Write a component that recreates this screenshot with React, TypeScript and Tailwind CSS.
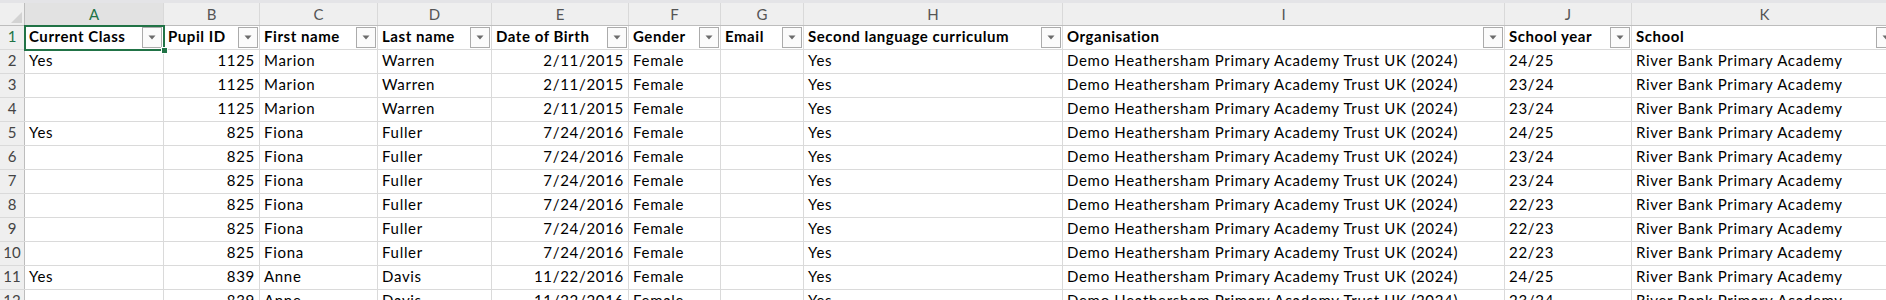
import React from "react";

const cols = [
  { key: "A", w: "w-[139px]", label: "Current Class", align: "left" },
  { key: "B", w: "w-[96px]", label: "Pupil ID", align: "right" },
  { key: "C", w: "w-[118px]", label: "First name", align: "left" },
  { key: "D", w: "w-[114px]", label: "Last name", align: "left" },
  { key: "E", w: "w-[137px]", label: "Date of Birth", align: "right" },
  { key: "F", w: "w-[92px]", label: "Gender", align: "left" },
  { key: "G", w: "w-[83px]", label: "Email", align: "left" },
  { key: "H", w: "w-[259px]", label: "Second language curriculum", align: "left" },
  { key: "I", w: "w-[442px]", label: "Organisation", align: "left" },
  { key: "J", w: "w-[127px]", label: "School year", align: "left" },
  { key: "K", w: "w-[266px]", label: "School", align: "left" },
];

const ORG = "Demo Heathersham Primary Academy Trust UK (2024)";
const SCH = "River Bank Primary Academy";

const m = ["1125", "Marion", "Warren", "2/11/2015"];
const f = ["825", "Fiona", "Fuller", "7/24/2016"];
const a = ["839", "Anne", "Davis", "11/22/2016"];

const mk = (cur: string, p: string[], yr: string) => [cur, ...p, "Female", "", "Yes", ORG, yr, SCH];

const rows: string[][] = [
  mk("Yes", m, "24/25"),
  mk("", m, "23/24"),
  mk("", m, "23/24"),
  mk("Yes", f, "24/25"),
  mk("", f, "23/24"),
  mk("", f, "23/24"),
  mk("", f, "22/23"),
  mk("", f, "22/23"),
  mk("", f, "22/23"),
  mk("Yes", a, "24/25"),
  mk("", a, "23/24"),
];

function FilterBtn() {
  return (
    <div className="absolute right-[1px] top-[1px] w-[20px] h-[21px] border border-[#ababab] bg-[#fbfbfb] flex items-center justify-center">
      <svg width="8" height="5" viewBox="0 0 8 5">
        <path d="M0.5 0.5 L7.5 0.5 L4 4.5 Z" fill="#6b6b6b" />
      </svg>
    </div>
  );
}

export default function App() {
  return (
    <div
      className="relative w-[1886px] h-[300px] overflow-hidden bg-white text-black"
      style={{ fontFamily: "Lato, 'Open Sans', sans-serif" }}
    >
      <div className="h-[3px] bg-[#e4e4e7]" />
      {/* column headers */}
      <div className="flex h-[23px] bg-[#efefef] border-b border-[#bdbdbd]">
        <div className="relative w-[25px] shrink-0 border-r border-[#bdbdbd]">
          <svg className="absolute right-[2px] bottom-[2px]" width="11" height="11" viewBox="0 0 11 11">
            <path d="M11 0 L11 11 L0 11 Z" fill="#d3d3d3" />
          </svg>
        </div>
        {cols.map((c) => (
          <div
            key={c.key}
            className={`${c.w} shrink-0 border-r border-[#d9d9d9] flex items-center justify-center text-[15px] ${
              c.key === "A" ? "text-[#217346] bg-[#e2e2e2]" : "text-[#555555]"
            }`}
          >
            {c.key}
          </div>
        ))}
      </div>
      {/* header data row */}
      <div className="flex h-[24px] border-b border-[#dadada]">
        <div className="w-[25px] shrink-0 bg-[#efefef] border-r border-[#bdbdbd] flex items-end justify-center pb-[2px] text-[15px] text-[#217346]">
          1
        </div>
        {cols.map((c) => (
          <div
            key={c.key}
            className={`${c.w} shrink-0 relative border-r border-[#dadada] flex items-end pl-[4px] pb-[2px] text-[15px] tracking-[0.55px] font-bold whitespace-nowrap overflow-hidden`}
          >
            {c.label}
            <FilterBtn />
          </div>
        ))}
      </div>
      {rows.map((r, i) => (
        <div key={i} className="flex h-[24px] border-b border-[#dadada]">
          <div className="w-[25px] shrink-0 bg-[#efefef] border-r border-[#bdbdbd] flex items-end justify-center pb-[2px] text-[15px] text-[#444444]">
            {i + 2}
          </div>
          {cols.map((c, j) => (
            <div
              key={c.key}
              className={`${c.w} shrink-0 border-r border-[#dadada] flex items-end pb-[2px] px-[4px] text-[15px] tracking-[0.69px] whitespace-nowrap overflow-hidden ${
                c.align === "right" ? "justify-end" : "justify-start"
              }`}
            >
              {r[j]}
            </div>
          ))}
        </div>
      ))}
      {/* selection */}
      <div className="absolute left-[24px] top-[25px] w-[141px] h-[26px] border-2 border-[#217346] pointer-events-none" />
      <div className="absolute left-[161px] top-[47px] w-[7px] h-[7px] bg-[#217346] border border-white" />
    </div>
  );
}
